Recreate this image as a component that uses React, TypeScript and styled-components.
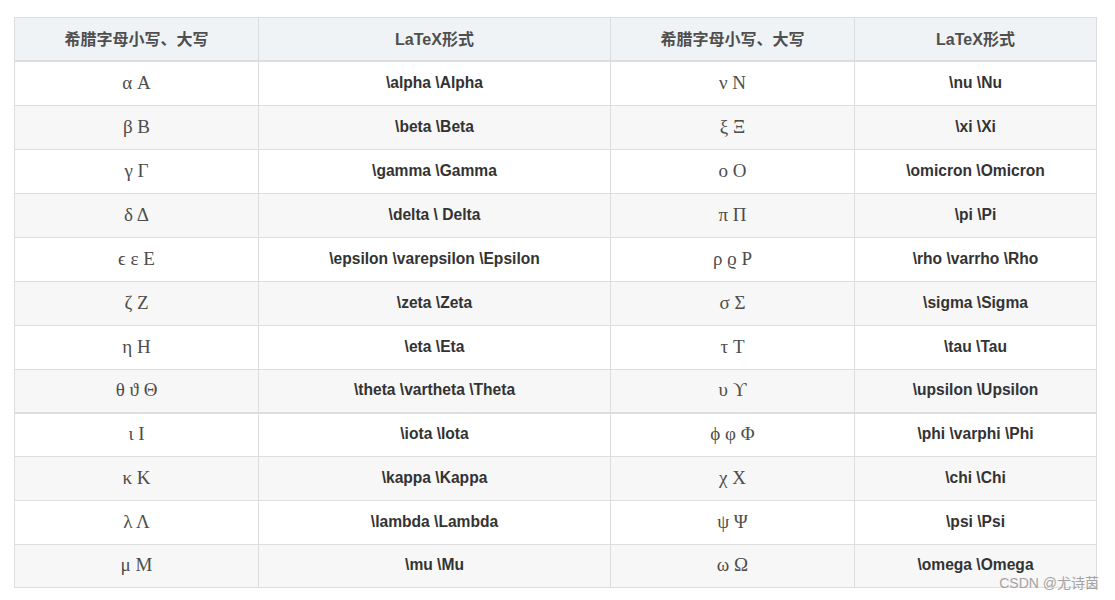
import React from 'react';
import styled, { createGlobalStyle } from 'styled-components';

const rows: [string, string, string, string][] = [
  ['α A', '\\alpha \\Alpha', 'ν N', '\\nu \\Nu'],
  ['β B', '\\beta \\Beta', 'ξ Ξ', '\\xi \\Xi'],
  ['γ Γ', '\\gamma \\Gamma', 'o O', '\\omicron \\Omicron'],
  ['δ Δ', '\\delta \\ Delta', 'π Π', '\\pi \\Pi'],
  ['ϵ ε E', '\\epsilon \\varepsilon \\Epsilon', 'ρ ϱ P', '\\rho \\varrho \\Rho'],
  ['ζ Z', '\\zeta \\Zeta', 'σ Σ', '\\sigma \\Sigma'],
  ['η H', '\\eta \\Eta', 'τ T', '\\tau \\Tau'],
  ['θ ϑ Θ', '\\theta \\vartheta \\Theta', 'υ ϒ', '\\upsilon \\Upsilon'],
  ['ι I', '\\iota \\Iota', 'ϕ φ Φ', '\\phi \\varphi \\Phi'],
  ['κ K', '\\kappa \\Kappa', 'χ X', '\\chi \\Chi'],
  ['λ Λ', '\\lambda \\Lambda', 'ψ Ψ', '\\psi \\Psi'],
  ['μ M', '\\mu \\Mu', 'ω Ω', '\\omega \\Omega'],
];

const GlobalStyle = createGlobalStyle`
  html, body {
    margin: 0;
    padding: 0;
    background: #ffffff;
  }
`;

const Page = styled.div`
  position: relative;
  width: 1115px;
  height: 600px;
  padding: 17px 0 0 14px;
  box-sizing: border-box;
  font-family: "Liberation Sans", Arial, "Noto Sans CJK SC", sans-serif;
`;

const Table = styled.table`
  border-collapse: collapse;
  width: 1082px;
  table-layout: fixed;
`;

const Head = styled.th`
  height: 39px;
  padding: 0 0 3px;
  background: #eff3f5;
  border: 1px solid #dddddd;
  border-bottom: 2px solid #dddddd;
  color: #4f4f4f;
  font-size: 16px;
  font-weight: bold;
  text-align: center;
`;

const Row = styled.tr<{ $striped: boolean; $break?: boolean }>`
  background: ${({ $striped }) => ($striped ? '#f7f7f7' : '#ffffff')};
  ${({ $break }) => ($break ? 'border-bottom: 2px solid #dddddd;' : '')}
`;

const Cell = styled.td<{ $short?: boolean }>`
  height: ${({ $short }) => ($short ? '40px' : '41px')};
  padding: 0 0 2px;
  border: 1px solid #dddddd;
  text-align: center;
  vertical-align: middle;
`;

const Greek = styled(Cell)`
  font-family: "Liberation Serif", "DejaVu Serif", serif;
  font-size: 19px;
  color: #4d4d4d;
`;

const Code = styled(Cell)`
  font-size: 15.6px;
  font-weight: bold;
  color: #333333;
`;

const Watermark = styled.div`
  position: absolute;
  right: 16px;
  bottom: 8px;
  font-size: 14px;
  color: #a3a3a3;
  font-family: "Liberation Sans", "Noto Sans CJK SC", sans-serif;
`;

export default function App() {
  return (
    <Page>
      <GlobalStyle />
      <Table>
        <colgroup>
          <col style={{ width: 244 }} />
          <col style={{ width: 352 }} />
          <col style={{ width: 244 }} />
          <col style={{ width: 242 }} />
        </colgroup>
        <thead>
          <tr>
            <Head>希腊字母小写、大写</Head>
            <Head>LaTeX形式</Head>
            <Head>希腊字母小写、大写</Head>
            <Head>LaTeX形式</Head>
          </tr>
        </thead>
        <tbody>
          {rows.map((r, i) => {
            const short = i === 7 || i === 8 || i === 11;
            return (
              <Row key={i} $striped={i % 2 === 1} $break={i === 7}>
                <Greek $short={short}>{r[0]}</Greek>
                <Code $short={short}>{r[1]}</Code>
                <Greek $short={short}>{r[2]}</Greek>
                <Code $short={short}>{r[3]}</Code>
              </Row>
            );
          })}
        </tbody>
      </Table>
      <Watermark>CSDN @尤诗茵</Watermark>
    </Page>
  );
}
